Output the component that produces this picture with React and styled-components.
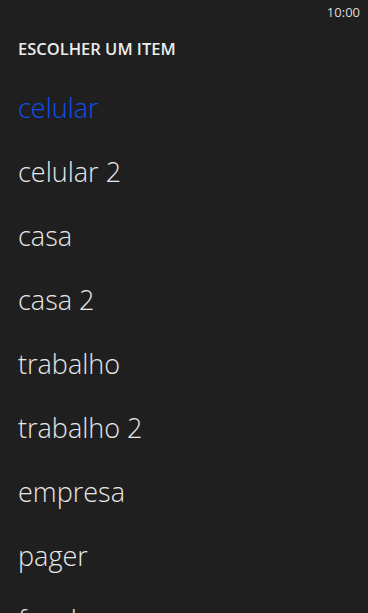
import React from 'react'
import styled, { createGlobalStyle } from 'styled-components';

const items = ['celular', 'celular 2', 'casa', 'casa 2', 'trabalho', 'trabalho 2', 'empresa', 'pager', 'fax da casa'];

const GlobalStyle = createGlobalStyle`
  html, body {
    margin: 0;
    padding: 0;
    background: #1f1f1f;
    overflow: hidden;
  }
`;

const App = () => {
    return (
        <Screen>
            <GlobalStyle />
            <StatusBar>
                <span>10:00</span>
            </StatusBar>
            <Title>ESCOLHER UM ITEM</Title>
            <List>
                {items.map((item, i) => (
                    <Item key={item} selected={i === 0}>{item}</Item>
                ))}
            </List>
        </Screen>
    )
}

const Screen = styled.div`
    width: 368px;
    height: 613px;
    background: #1f1f1f;
    overflow: hidden;
    font-family: "Open Sans", "Noto Sans", sans-serif;
    color: #e8e8e8;
`;

const StatusBar = styled.div`
    height: 24px;
    display: flex;
    justify-content: flex-end;
    align-items: center;
    padding-right: 8px;
    font-size: 13px;
    font-weight: 400;
    color: #dcdcdc;
`;

const Title = styled.h1`
    margin: 0;
    padding: 13px 0 0 18px;
    font-size: 16.5px;
    font-weight: 600;
    letter-spacing: 0;
    color: #ececec;
`;

const List = styled.ul`
    list-style: none;
    margin: 0;
    padding: 15px 0 0 18px;
`;

const Item = styled.li`
    height: 64px;
    display: flex;
    align-items: center;
    font-size: 27px;
    font-weight: 300;
    color: ${p => p.selected ? '#0f50ea' : '#e8e8e8'};
`;

export default App
